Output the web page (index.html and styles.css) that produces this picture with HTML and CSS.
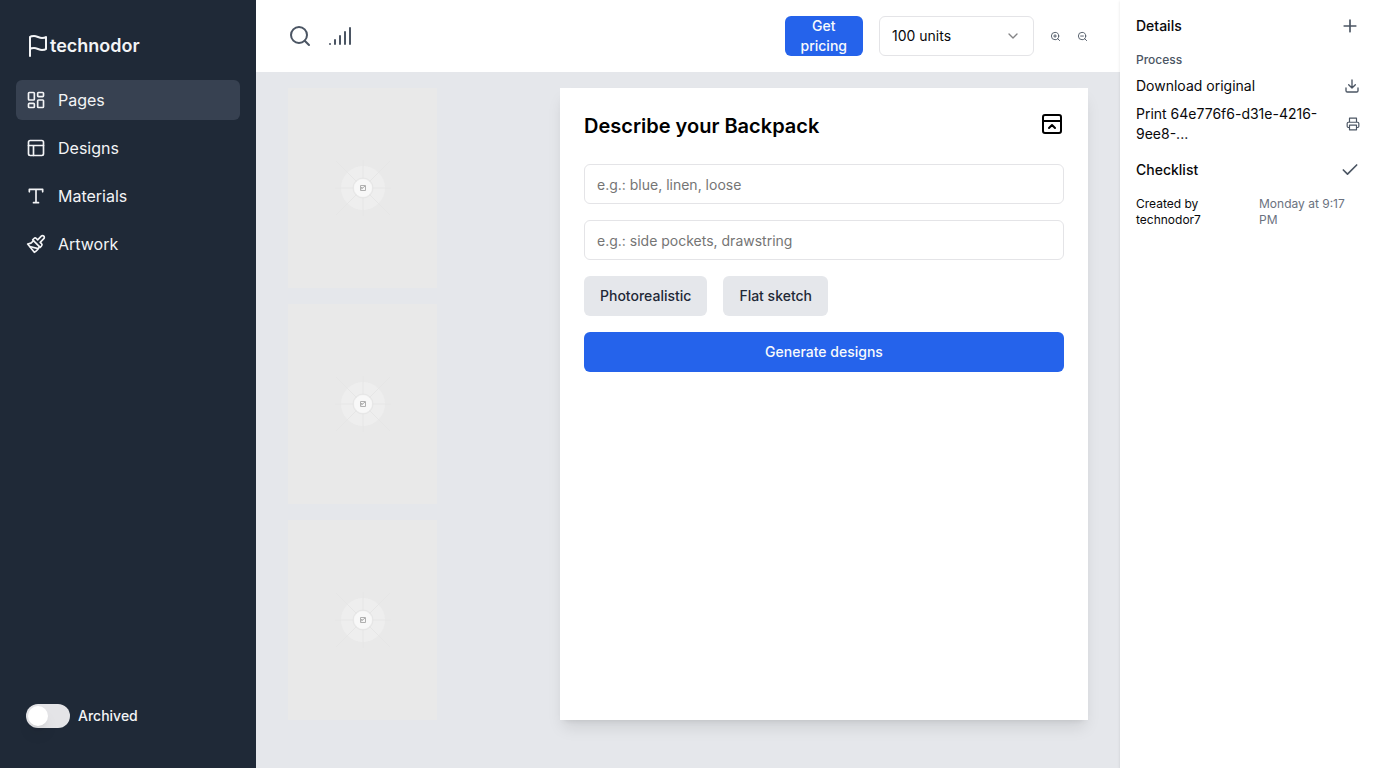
FILE: index.html
```html
<!DOCTYPE html>
<html lang="en">
<head>
<meta charset="utf-8">
<meta name="viewport" content="width=device-width, initial-scale=1">
<title>technodor</title>
<link rel="stylesheet" href="styles.css">
</head>
<body>
<svg class="sprite" aria-hidden="true">
  <symbol id="placeholder" viewBox="0 0 60 60">
    <circle class="ph-disc" cx="30" cy="30" r="22"/>
    <g class="ph-lines">
      <path d="M2 30h56M30 2v56M3 3l54 54M57 3L3 57"/>
      <circle cx="30" cy="30" r="10"/>
    </g>
    <circle class="ph-core" cx="30" cy="30" r="9"/>
    <path class="ph-glyph" d="M27.500 27.500h5v5h-5zM28 31l2-1 1-1.500h1.500M27.500 29.500h2"/>
  </symbol>
</svg>
<div class="app">
  <aside class="sidebar">
    <div class="brand">
      <svg class="icon icon-lg" viewBox="0 0 24 24"><path d="M4 15s1-1 4-1 5 2 8 2 4-1 4-1V3s-1 1-4 1-5-2-8-2-4 1-4 1z"/><path d="M4 22v-7"/></svg>
      <span>technodor</span>
    </div>
    <nav class="nav">
      <a class="nav-link active" href="#pages" aria-current="page">
        <svg class="icon" viewBox="0 0 24 24"><rect x="3" y="3" width="7" height="9" rx="1"/><rect x="14" y="3" width="7" height="5" rx="1"/><rect x="14" y="12" width="7" height="9" rx="1"/><rect x="3" y="16" width="7" height="5" rx="1"/></svg>
        Pages</a>
      <a class="nav-link" href="#designs">
        <svg class="icon" viewBox="0 0 24 24"><rect x="3" y="3" width="18" height="18" rx="2"/><path d="M3 9h18M9 21V9"/></svg>
        Designs</a>
      <a class="nav-link" href="#materials">
        <svg class="icon" viewBox="0 0 24 24"><path d="M4 7V4h16v3M9 20h6M12 4v16"/></svg>
        Materials</a>
      <a class="nav-link" href="#artwork">
        <svg class="icon" viewBox="0 0 24 24"><path d="M18.370 2.630 14 7l-1.590-1.590a2 2 0 0 0-2.820 0L8 7l9 9 1.590-1.590a2 2 0 0 0 0-2.820L17 10l4.370-4.370a2.120 2.120 0 1 0-3-3Z"/><path d="M9 8c-2 3-4 3.500-7 4l8 10c2-1 6-5 6-7"/><path d="M14.500 17.500 4.500 15"/></svg>
        Artwork</a>
    </nav>
    <label class="switch">
      <input type="checkbox" role="switch">
      <span>Archived</span>
    </label>
  </aside>

  <main class="main">
    <header class="toolbar">
      <button class="icon-button" type="button" aria-label="Search">
        <svg class="icon icon-lg" viewBox="0 0 24 24"><circle cx="11" cy="11" r="8"/><path d="m21 21-4.300-4.300"/></svg>
      </button>
      <button class="icon-button" type="button" aria-label="Signal">
        <svg class="icon icon-lg" viewBox="0 0 24 24"><path d="M2 20h.01M7 20v-4M12 20v-8M17 20V8M22 4v16"/></svg>
      </button>
      <div class="toolbar-actions">
        <button class="button primary pricing" type="button">Get pricing</button>
        <div class="select">
          <select aria-label="Units"><option>100 units</option><option>500 units</option></select>
          <svg class="icon icon-sm" viewBox="0 0 24 24"><path d="m6 9 6 6 6-6"/></svg>
        </div>
        <button class="icon-button" type="button" aria-label="Zoom in">
          <svg class="icon icon-xs" viewBox="0 0 24 24"><circle cx="11" cy="11" r="8"/><path d="m21 21-4.350-4.350M11 8v6M8 11h6"/></svg>
        </button>
        <button class="icon-button" type="button" aria-label="Zoom out">
          <svg class="icon icon-xs" viewBox="0 0 24 24"><circle cx="11" cy="11" r="8"/><path d="m21 21-4.350-4.350M8 11h6"/></svg>
        </button>
      </div>
    </header>

    <div class="workspace">
      <div class="thumbs">
        <div class="thumb"><svg viewBox="0 0 60 60"><use href="#placeholder"/></svg></div>
        <div class="thumb"><svg viewBox="0 0 60 60"><use href="#placeholder"/></svg></div>
        <div class="thumb"><svg viewBox="0 0 60 60"><use href="#placeholder"/></svg></div>
      </div>
      <form class="card">
        <div class="card-head">
          <h1>Describe your Backpack</h1>
          <button class="icon-button dark" type="button" aria-label="Collapse">
            <svg class="icon icon-lg" viewBox="0 0 24 24"><rect x="3" y="3" width="18" height="18" rx="2"/><path d="M3 9h18M9 16l3-3 3 3"/></svg>
          </button>
        </div>
        <div class="fields">
          <input class="field" type="text" aria-label="Look" placeholder="e.g.: blue, linen, loose">
          <input class="field" type="text" aria-label="Features" placeholder="e.g.: side pockets, drawstring">
          <div class="styles">
            <button class="button muted" type="button">Photorealistic</button>
            <button class="button muted" type="button">Flat sketch</button>
          </div>
          <button class="button primary" type="button">Generate designs</button>
        </div>
      </form>
    </div>
  </main>

  <aside class="details">
    <div class="row">
      <h2>Details</h2>
      <button class="icon-button" type="button" aria-label="Add">
        <svg class="icon" viewBox="0 0 24 24"><path d="M5 12h14M12 5v14"/></svg>
      </button>
    </div>
    <div class="process">
      <h3>Process</h3>
      <div class="row">
        <span>Download original</span>
        <button class="icon-button" type="button" aria-label="Download">
          <svg class="icon icon-sm" viewBox="0 0 24 24"><path d="M21 15v4a2 2 0 0 1-2 2H5a2 2 0 0 1-2-2v-4M7 10l5 5 5-5M12 15V3"/></svg>
        </button>
      </div>
      <div class="row">
        <span>Print 64e776f6-d31e-4216-9ee8-...</span>
        <button class="icon-button" type="button" aria-label="Print">
          <svg class="icon icon-print" viewBox="0 0 24 24"><path d="M6 9V2h12v7M6 18H4a2 2 0 0 1-2-2v-5a2 2 0 0 1 2-2h16a2 2 0 0 1 2 2v5a2 2 0 0 1-2 2h-2"/><path d="M6 14h12v8H6z"/></svg>
        </button>
      </div>
    </div>
    <div class="row">
      <h2>Checklist</h2>
      <svg class="icon" viewBox="0 0 24 24"><path d="M20 6 9 17l-5-5"/></svg>
    </div>
    <div class="meta">
      <span>Created by technodor7</span>
      <time>Monday at 9:17 PM</time>
    </div>
  </aside>
</div>
</body>
</html>
```
FILE: styles.css
```css
*, *::before, *::after { box-sizing: border-box; }

body {
  margin: 0;
  font: 14px/20px Inter, "Liberation Sans", sans-serif;
  color: #09090b;
}

h1, h2, h3 { margin: 0; font-weight: 500; }
h2 { font-size: 14px; line-height: 20px; }
button, input, select { font: inherit; color: inherit; margin: 0; }
button { border: 0; cursor: pointer; }

.sprite { position: absolute; width: 0; height: 0; }

.icon {
  display: block;
  flex: none;
  width: 20px;
  height: 20px;
  fill: none;
  stroke: currentColor;
  stroke-width: 2;
  stroke-linecap: round;
  stroke-linejoin: round;
}
.icon-lg { width: 24px; height: 24px; }
.icon-sm { width: 16px; height: 16px; }
.icon-print { width: 14px; height: 14px; }
.icon-xs { width: 11px; height: 11px; }

.icon-button { flex: none; padding: 0; background: none; color: #4b5563; }
.icon-button.dark { color: #000; }

.app {
  display: grid;
  grid-template-columns: 256px 1fr 256px;
  min-height: 100vh;
}

/* Sidebar */
.sidebar {
  display: flex;
  flex-direction: column;
  gap: 20px;
  padding: 32px 16px 40px;
  background: #1f2937;
  color: #f3f4f6;
}
.brand {
  display: flex;
  align-items: center;
  padding: 0 10px;
  font-size: 18px;
  line-height: 28px;
  font-weight: 600;
}
.nav { display: flex; flex-direction: column; gap: 8px; }
.nav-link {
  display: flex;
  align-items: center;
  gap: 12px;
  padding: 8px 10px;
  border-radius: 6px;
  font-size: 16px;
  line-height: 24px;
  color: #f3f4f6;
  text-decoration: none;
}
.nav-link.active { background: #374151; }

.switch {
  display: flex;
  align-items: center;
  gap: 8px;
  margin-top: auto;
  padding: 0 10px;
  font-weight: 500;
}
.switch input {
  appearance: none;
  display: flex;
  width: 44px;
  height: 24px;
  padding: 2px;
  border-radius: 12px;
  background: #e4e4e7;
}
.switch input::before {
  content: "";
  width: 20px;
  height: 20px;
  border-radius: 50%;
  background: #fff;
  box-shadow: 0 10px 15px -3px rgb(0 0 0 / 10%), 0 4px 6px -4px rgb(0 0 0 / 10%);
}
.switch input:checked::before { margin-left: auto; }

/* Main column */
.main { display: flex; flex-direction: column; min-width: 0; background: #e5e7eb; }
.toolbar {
  display: flex;
  align-items: center;
  gap: 16px;
  padding: 16px 32px;
  background: #fff;
}
.toolbar-actions { display: flex; align-items: center; gap: 16px; margin-left: auto; }

.button {
  height: 40px;
  padding: 0 16px;
  border-radius: 6px;
  font-weight: 500;
}
.primary { background: #2563eb; color: #f8fafc; }
.muted { background: #e5e7eb; color: #1f2937; }
.pricing { width: min-content; }

.select { display: grid; width: 155px; align-items: center; }
.select select {
  grid-area: 1 / 1;
  appearance: none;
  height: 40px;
  padding: 0 12px;
  border: 1px solid #e4e4e7;
  border-radius: 6px;
  background: #fff;
}
.select .icon {
  grid-area: 1 / 1;
  justify-self: end;
  margin-right: 13px;
  color: #848486;
  pointer-events: none;
}

.workspace {
  display: grid;
  grid-template-columns: repeat(3, 1fr);
  gap: 16px;
  padding: 16px 32px;
}
.thumbs { display: flex; flex-direction: column; gap: 16px; }
.thumb {
  display: flex;
  align-items: center;
  justify-content: center;
  width: 149px;
  height: 200px;
  background: #e9e9e9;
}
.thumb svg { width: 60px; height: 60px; }
.ph-disc { fill: #eeeeee; }
.ph-core { fill: #f8f8f8; }
.ph-lines { fill: none; stroke: #e6e6e6; stroke-width: 1; }
.ph-glyph { fill: none; stroke: #b0b0b0; stroke-width: 1; }

.card {
  grid-column: span 2;
  display: flex;
  flex-direction: column;
  gap: 24px;
  padding: 24px;
  background: #fff;
  box-shadow: 0 10px 15px -3px rgb(0 0 0 / 10%), 0 4px 6px -4px rgb(0 0 0 / 10%);
}
.card-head { display: flex; justify-content: space-between; align-items: flex-start; }
.card h1 { font-size: 20px; line-height: 28px; font-weight: 600; color: #000; }
.fields { display: flex; flex-direction: column; gap: 16px; }
.field {
  width: 100%;
  height: 40px;
  padding: 0 12px;
  border: 1px solid #e4e4e7;
  border-radius: 6px;
  background: #fff;
}
.field::placeholder { color: #757575; }
.styles { display: flex; gap: 16px; }

/* Details panel */
.details {
  display: flex;
  flex-direction: column;
  gap: 16px;
  padding: 16px;
  background: #fff;
  box-shadow: 0 1px 3px rgb(0 0 0 / 10%), 0 1px 2px -1px rgb(0 0 0 / 10%);
}
.details .icon { color: #4b5563; }
.row { display: flex; align-items: center; justify-content: space-between; gap: 8px; }
.process { display: flex; flex-direction: column; gap: 8px; }
.process h3 { font-size: 12px; line-height: 16px; color: #4b5563; }
.meta {
  display: grid;
  grid-template-columns: 107px 1fr;
  gap: 16px;
  font-size: 12px;
  line-height: 16px;
}
.meta time { color: #6b7280; }
```
